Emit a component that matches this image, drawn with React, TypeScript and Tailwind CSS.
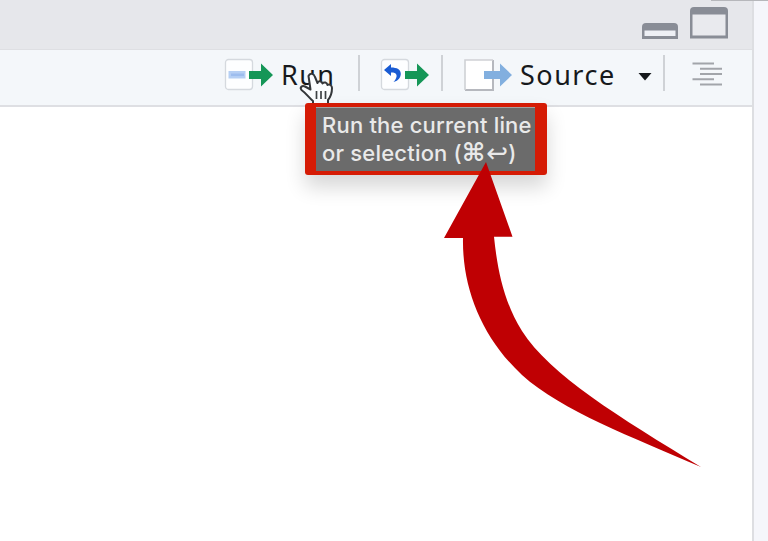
import React from "react";

function Divider({ className = "" }: { className?: string }) {
  return <span className={`h-[36px] w-[2px] shrink-0 bg-[#cfd2d6] ${className}`} />;
}

function RunIcon() {
  return (
    <svg className="h-9 w-[50px] shrink-0" viewBox="0 0 50 36">
      <rect x="1.5" y="2.5" width="27" height="30" rx="3" fill="#fdfeff" stroke="#d5d9de" strokeWidth="1.3" />
      <rect x="4.5" y="14" width="17" height="7.5" fill="#b5cff4" />
      <path d="M7 17.8H20" stroke="#9dbdee" strokeWidth="2.5" />
      <path d="M25 14H37V6.5L49 18L37 29.5V22H25Z" fill="#159657" />
    </svg>
  );
}

function RerunIcon() {
  return (
    <svg className="h-9 w-[50px] shrink-0" viewBox="0 0 50 36">
      <rect x="1.5" y="2.5" width="27" height="30" rx="3" fill="#fdfeff" stroke="#d5d9de" strokeWidth="1.3" />
      <path d="M4 13L11 7V10.5C17 10.5 20.8 12.5 20.8 17C20.5 21.5 17.5 24 13.5 25C15.8 22.5 17 20 16.5 18C16 16 14 15.6 11 15.6V19Z" fill="#195bd3" />
      <path d="M25 14H37V6.5L49 18L37 29.5V22H25Z" fill="#159657" />
    </svg>
  );
}

function SourceIcon() {
  return (
    <svg className="h-9 w-[50px] shrink-0" viewBox="0 0 50 36">
      <rect x="2" y="3" width="28" height="30" fill="#ffffff" />
      <path d="M2 33H30V3" fill="none" stroke="#b6b8be" strokeWidth="2" />
      <path d="M2 33V3H30" fill="none" stroke="#cfd1d5" strokeWidth="1.6" />
      <path d="M21 14H37V6.5L49 18L37 29.5V22H21Z" fill="#82afdf" />
    </svg>
  );
}

function HandCursor() {
  return (
    <svg className="absolute left-[298px] top-[71px] h-[35px] w-[37px]" viewBox="0 0 37 35">
      <path
        d="M10.5 5C12 1.5 16 2.5 17 6L19.5 12C20 9.5 23.5 9.5 24.5 12.5C26 10.5 29 11.5 29.5 14C31.5 12.5 34 14.5 34 17C34 23 32.5 26 30 29V33H15V30C11 27 9 23 3.5 19C1.5 16.5 4 14 7 15.5L12.5 18.5Z"
        fill="#fbfdff"
        stroke="#34373a"
        strokeWidth="2"
        strokeLinejoin="round"
      />
      <path d="M18.5 20V28M23 20V28M27.5 20V28" stroke="#3e4245" strokeWidth="1.7" />
    </svg>
  );
}

function Tooltip() {
  return (
    <div className="absolute left-[305px] top-[103px] h-[72px] w-[242px] rounded-[3px] bg-[#d51b05] pt-[4px] pr-[12px] pb-[4px] pl-[11px] shadow-[0_12px_20px_rgba(0,0,0,0.16)]">
      <div className="h-full whitespace-nowrap border-t border-[#a4a1a1] bg-[#6b6b6b] pt-[3px] pl-[6px] font-['Inter',sans-serif] text-[22px] font-medium leading-[28px] tracking-[0.2px] text-[#e9e9e9]">
        <div>Run the current line</div>
        <div className="flex">
          <span>or selection (</span>
          <span className="font-['DejaVu_Sans',sans-serif] text-[25px] font-bold">⌘</span>
          <span className="ml-px font-['DejaVu_Sans',sans-serif] text-[26px]">↩</span>
          <span>)</span>
        </div>
      </div>
    </div>
  );
}

function PointerArrow() {
  return (
    <svg className="absolute left-[430px] top-[150px] h-[330px] w-[280px]" viewBox="430 150 280 330">
      <path
        d="M486 162L512.5 236.8H494C497 266 503 301 522 331C550 375 619 417 701 467C632 437 562 411 522 375C482 338 462 288 463 238H444Z"
        fill="#bf0003"
      />
    </svg>
  );
}

export default function App() {
  return (
    <div className="relative flex h-[541px] w-[768px] overflow-hidden bg-white">
      <div className="flex w-[752px] flex-col">
        <header className="flex h-[49px] justify-end gap-[10px] bg-[#e6e7eb] pr-[23px]">
          <svg className="mt-[22px] h-[17px] w-[38px]" viewBox="0 0 38 17">
            <path d="M1 17V5Q1 1 5 1H33Q37 1 37 5V17Z" fill="#898d96" />
            <rect x="3.5" y="8.5" width="31" height="5.5" fill="#eef0f5" />
          </svg>
          <svg className="mt-[6px] h-[33px] w-[40px]" viewBox="0 0 40 33">
            <path d="M1 32.5V5Q1 1 5 1H35Q39 1 39 5V32.5Z" fill="#898d96" />
            <rect x="3.5" y="8.5" width="33" height="21" fill="#e9eaee" />
          </svg>
        </header>
        <div className="flex h-[58px] items-center border-t border-b-2 border-[#dedfe3] bg-[#f4f7fa] pb-[5px] pl-[224px] font-['Noto_Sans',sans-serif] text-[27px] leading-[36px] text-[#17191c]">
          <RunIcon />
          <span className="ml-[7px] w-[54px] tracking-[1.4px]">Run</span>
          <Divider className="ml-[23px] -mt-[5px]" />
          <span className="ml-[20px] flex"><RerunIcon /></span>
          <Divider className="ml-[11px] -mt-[5px]" />
          <span className="ml-[20px] flex"><SourceIcon /></span>
          <span className="ml-[7px] w-[96px] tracking-[1.5px]">Source</span>
          <svg className="mt-[2px] ml-[22px] h-[9px] w-[14px]" viewBox="0 0 14 9">
            <path d="M0.5 1H13.5L7 8.5Z" fill="#15181b" />
          </svg>
          <Divider className="ml-[11px] -mt-[5px]" />
          <svg className="-mt-[2px] ml-[27px] h-[24px] w-[32px]" viewBox="0 0 32 24">
            <path d="M0.5 1.5H22M8 6.8H30M8 12H30M0.5 17.3H22M8 22.5H30" stroke="#a2a5aa" strokeWidth="2" />
          </svg>
        </div>
        <main className="flex-1 bg-white" />
      </div>
      <div className="flex-1 border-l-2 border-[#dddee2] bg-[#f5f6fb]" />
      <div className="absolute left-[711px] top-0 h-px w-[57px] bg-[#b6b7bb]" />
      <HandCursor />
      <Tooltip />
      <PointerArrow />
    </div>
  );
}
